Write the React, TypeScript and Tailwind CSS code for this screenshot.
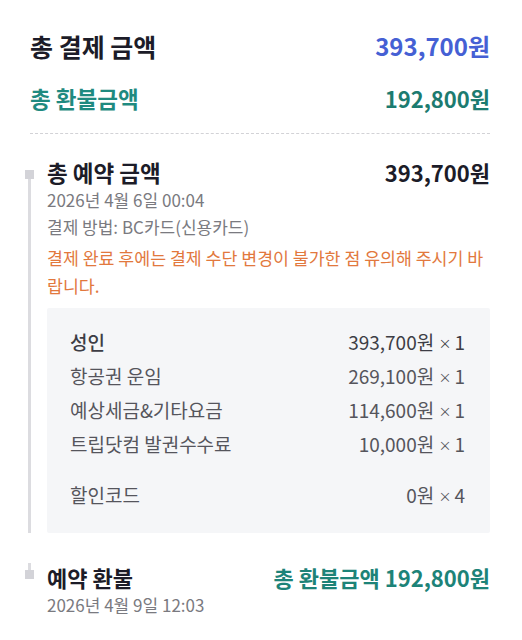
import React from 'react';

const rows = [
  { label: '성인', amount: '393,700원', qty: 1, strong: true },
  { label: '항공권 운임', amount: '269,100원', qty: 1 },
  { label: '예상세금&기타요금', amount: '114,600원', qty: 1 },
  { label: '트립닷컴 발권수수료', amount: '10,000원', qty: 1 },
];

function Row({ label, amount, qty, strong }: { label: string; amount: string; qty: number; strong?: boolean }) {
  return (
    <div className="flex items-center justify-between h-[34px] text-[19px] leading-[34px]">
      <span className={strong ? 'text-[#3d3d45] font-medium' : 'text-[#55555c]'}>{label}</span>
      <span className={strong ? 'text-[#3d3d45]' : 'text-[#55555c]'}>
        {amount} <span className="text-[13px] align-[2px] mr-[3px]">×</span>{qty}
      </span>
    </div>
  );
}

export default function App() {
  return (
    <div
      className="w-[522px] h-[640px] bg-white overflow-hidden"
      style={{ fontFamily: '"Noto Sans CJK KR", "Noto Sans", sans-serif' }}
    >
      <div className="pl-[30px] pr-[32px] pt-[30px]">
        <div className="flex items-center justify-between h-[32px]">
          <span className="text-[25px] font-bold text-[#1c1c28] leading-[32px]">총 결제 금액</span>
          <span className="text-[24px] font-bold text-[#4560d4] leading-[32px]">393,700원</span>
        </div>
        <div className="flex items-center justify-between h-[28px] mt-[22px]">
          <span className="text-[22.5px] font-bold text-[#1f8a80] leading-[28px]">총 환불금액</span>
          <span className="text-[22px] font-bold text-[#1c7b70] leading-[28px]">192,800원</span>
        </div>
        <div className="mt-[21px] border-t border-dashed border-[#d2d2d6]" />
      </div>

      <div className="pl-[25px] pr-[32px] pt-[24px]">
        {/* 예약 */}
        <div className="flex pb-[30px]">
          <div className="w-[22px] shrink-0 flex flex-col">
            <div className="h-[12px]" />
            <div className="w-[9px] h-[9px] bg-[#d3d3d8]" />
            <div className="w-[3px] ml-[3px] flex-1 bg-[#dcdce0]" />
          </div>
          <div className="flex-1">
            <div className="flex items-center justify-between h-[28px]">
              <span className="text-[22.5px] font-bold text-[#1c1c28] leading-[28px]">총 예약 금액</span>
              <span className="text-[22px] font-bold text-[#1c1c28] leading-[28px]">393,700원</span>
            </div>
            <div className="text-[17px] leading-[27px] text-[#7a7a80]">2026년 4월 6일 00:04</div>
            <div className="text-[17px] leading-[27px] text-[#7a7a80]">결제 방법: BC카드(신용카드)</div>
            <div className="mt-[4px] text-[17.3px] leading-[28px] text-[#e2783d]">
              결제 완료 후에는 결제 수단 변경이 불가한 점 유의해 주시기 바랍니다.
            </div>
            <div className="mt-[8px] bg-[#f5f6f8] rounded-[2px] pl-[23px] pr-[25px] pt-[17px] pb-[21px]">
              {rows.map((r) => (
                <Row key={r.label} {...r} />
              ))}
              <div className="mt-[17px]">
                <Row label="할인코드" amount="0원" qty={4} />
              </div>
            </div>
          </div>
        </div>

        {/* 환불 */}
        <div className="flex">
          <div className="w-[22px] shrink-0 flex flex-col">
            <div className="w-[3px] ml-[3px] h-[7px] bg-[#dcdce0]" />
            <div className="w-[9px] h-[9px] bg-[#d3d3d8]" />
          </div>
          <div className="flex-1">
            <div className="flex items-center justify-between h-[28px]">
              <span className="text-[22px] font-bold text-[#1c1c28] leading-[28px]">예약 환불</span>
              <span className="text-[22px] font-bold text-[#1d8378] leading-[28px]">총 환불금액 192,800원</span>
            </div>
            <div className="text-[17px] leading-[27px] text-[#7a7a80]">2026년 4월 9일 12:03</div>
          </div>
        </div>
      </div>
    </div>
  );
}
